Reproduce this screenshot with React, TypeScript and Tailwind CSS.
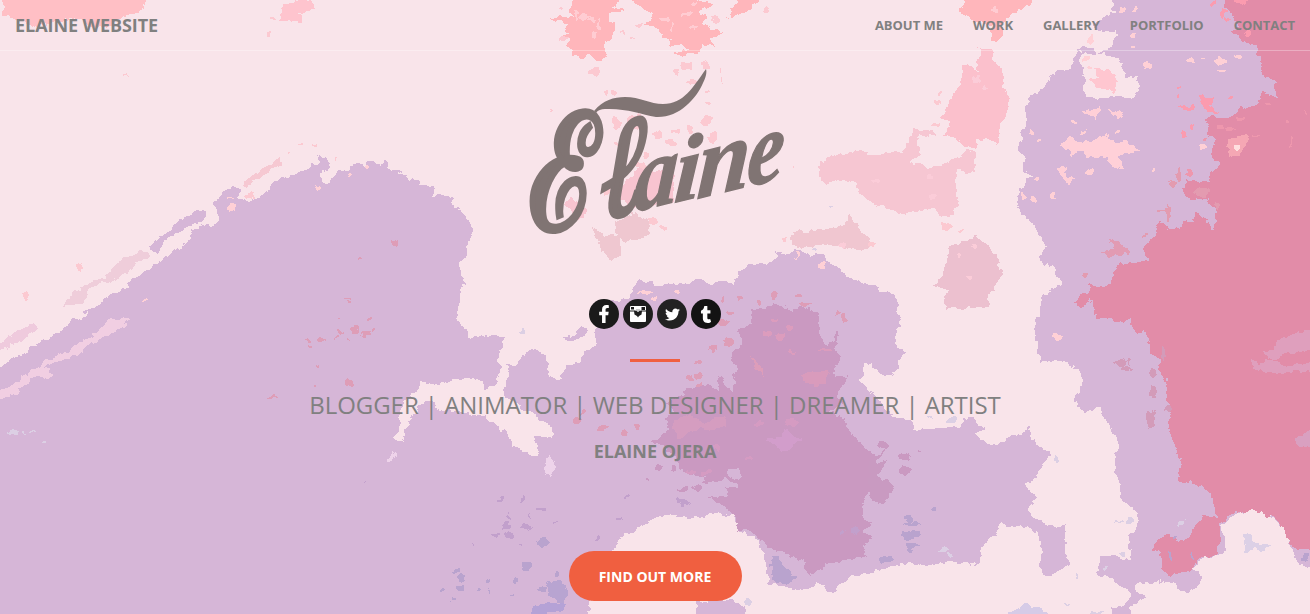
import React from "react";
import { FaFacebookF, FaTumblr, FaTwitter } from "react-icons/fa";

const base =
  "0,367 8,361 27,353 33,345 50,339 63,329 72,320 90,315 84,313 95,308 105,298 128,287 132,280 150,270 165,258 182,247 190,239 192,230 202,227 213,226 220,216 214,203 225,192 235,186 241,190 236,197 248,202 258,197 270,191 272,182 285,178 305,171 310,165 320,163 318,156 328,160 329,170 320,172 322,183 330,184 338,172 350,170 352,163 360,164 365,170 368,163 375,162 380,168 385,161 392,170 402,171 395,174 413,179 420,185 433,187 433,197 440,196 452,198 453,205 465,216 474,230 468,243 466,257 459,264 459,273 464,280 460,295 457,320 472,339 490,335 505,337 503,345 498,353 500,375 494,384 486,390 482,380 463,378 440,383 430,383 423,381 413,393 403,402 399,417 400,425 393,437 402,442 408,425 420,405 430,400 434,406 440,411 455,411 470,415 485,418 500,430 508,434 512,443 520,450 530,455 540,456 537,445 533,437 552,438 552,426 540,420 536,414 527,412 515,402 503,396 504,388 510,376 507,365 518,366 522,357 530,352 538,349 548,362 547,374 556,382 562,378 566,367 573,365 580,362 588,350 597,345 596,330 600,320 598,305 630,298 633,288 641,282 651,281 653,288 670,284 685,284 699,279 710,284 725,282 733,287 738,275 748,264 765,264 778,258 776,252 787,254 797,250 810,255 824,255 828,262 840,270 852,280 870,285 876,285 880,292 893,294 897,305 897,318 900,322 895,335 898,348 906,352 900,360 892,375 885,376 875,369 873,362 864,364 861,377 865,388 875,396 885,410 897,418 910,421 914,430 935,429 960,427 966,418 974,420 976,426 985,428 974,435 982,441 993,445 1003,443 1010,436 1024,435 1028,427 1032,440 1048,453 1048,462 1041,464 1035,478 1024,482 1028,492 1036,497 1027,510 1035,518 1055,528 1066,525 1064,540 1064,555 1070,564 1055,572 1045,577 1039,567 1043,550 1038,535 1028,525 1010,527 1001,522 995,535 980,547 982,556 977,566 966,560 958,563 950,560 933,565 905,563 880,568 870,573 850,575 840,583 835,592 828,590 825,583 815,585 800,590 785,586 770,584 768,573 766,560 760,540 750,536 740,530 733,515 718,512 700,516 688,516 668,514 655,517 640,526 633,532 622,535 613,550 603,590 587,605 587,630 -10,630 -10,370";

const rightPurple =
  "1113,-10 1113,0 1115,13 1104,18 1095,25 1100,30 1112,33 1118,28 1120,36 1113,42 1108,50 1100,54 1112,55 1124,63 1126,77 1137,75 1140,88 1134,99 1120,97 1105,99 1088,98 1082,92 1084,78 1080,60 1078,50 1094,53 1094,49 1080,48 1073,60 1073,70 1058,71 1050,80 1043,90 1030,98 1026,110 1028,122 1022,135 1021,150 1027,155 1023,170 1033,174 1026,182 1023,189 1017,197 1022,213 1032,221 1037,228 1046,242 1046,248 1040,256 1045,264 1053,265 1058,275 1063,283 1052,292 1042,298 1041,312 1035,325 1038,345 1041,360 1060,360 1079,367 1083,380 1082,392 1076,395 1077,405 1085,411 1101,406 1107,420 1117,437 1118,450 1116,470 1121,485 1122,498 1135,508 1141,520 1138,528 1130,535 1131,563 1115,556 1101,557 1098,575 1112,575 1120,586 1130,590 1130,600 1120,608 1112,609 1112,625 1127,625 1130,605 1145,597 1133,590 1133,584 1165,580 1180,586 1188,593 1197,585 1203,575 1190,568 1205,556 1222,553 1225,540 1220,527 1235,513 1252,508 1270,515 1285,528 1292,545 1300,565 1325,568 1325,-10";

const rose =
  "1228,-10 1225,8 1235,20 1240,28 1230,30 1245,42 1257,48 1260,62 1263,78 1275,80 1276,98 1268,94 1262,90 1258,103 1245,110 1240,105 1235,115 1225,118 1205,117 1210,130 1205,134 1216,137 1211,155 1220,165 1211,173 1210,182 1185,181 1184,195 1192,201 1205,197 1214,208 1217,222 1212,230 1205,218 1195,212 1193,222 1182,221 1180,228 1168,230 1160,220 1155,235 1143,247 1147,260 1134,263 1120,263 1113,275 1110,285 1098,287 1090,283 1088,292 1078,298 1074,302 1080,308 1092,300 1095,318 1106,318 1115,322 1130,319 1136,333 1145,330 1150,345 1150,355 1160,358 1160,375 1168,382 1165,400 1172,408 1168,420 1172,440 1180,462 1178,482 1195,484 1209,491 1215,505 1217,518 1204,516 1190,533 1180,542 1170,536 1161,536 1152,548 1160,553 1162,570 1170,575 1180,573 1190,571 1200,558 1218,554 1220,540 1220,525 1232,514 1252,509 1272,517 1283,527 1287,538 1297,549 1325,550 1325,-10";

const mauve =
  "753,307 765,310 775,302 792,310 800,306 820,312 818,325 830,327 840,335 835,350 840,358 832,375 848,377 838,392 843,403 830,412 845,418 850,435 865,445 876,458 873,475 870,490 862,505 864,520 872,522 862,532 872,536 863,546 867,556 850,560 830,562 815,572 808,575 803,560 790,556 775,551 762,540 745,530 738,530 735,517 722,505 708,497 730,496 724,488 740,486 726,478 702,484 706,476 692,476 680,470 678,460 664,445 650,443 668,430 665,418 674,413 668,402 690,388 707,385 719,392 718,377 732,392 736,370 730,353 742,345 738,330 752,325";

type Patch = { fill: string; points: string };

const patches: Patch[] = [
  { fill: "#ffbfc5", points: "3,-10 3,0 4,14 15,18 28,23 38,27 60,21 80,19 90,28 112,26 120,17 133,14 144,8 143,-10" },
  { fill: "#fec4ce", points: "297,-10 297,0 312,0 316,10 305,11 298,14 305,20 302,22 280,21 282,12 282,4 295,3" },
  { fill: "#ffb6bb", points: "574,-10 574,0 569,12 573,16 553,18 553,21 569,22 565,25 568,33 562,35 571,42 564,47 573,50 573,56 585,57 593,57 600,62 607,57 603,52 605,42 612,38 616,23 608,20 608,12 623,12 622,9 612,8 620,0 620,-10" },
  { fill: "#ffb6bb", points: "632,-10 632,0 643,9 654,14 650,20 645,26 659,29 660,36 672,40 667,45 680,45 690,50 674,53 674,55 699,54 702,45 714,45 710,40 723,31 712,30 701,24 709,16 696,12 715,5 697,0 697,-10" },
  { fill: "#ffb6bb", points: "739,-10 737,2 729,10 732,16 724,21 735,16 748,11 758,0 758,-10" },
  { fill: "#ffb6bb", points: "962,-10 963,8 957,11 966,16 973,20 992,27 990,40 996,42 1003,36 1003,24 1009,15 1023,8 1034,0 1034,-10" },
  { fill: "#fbc0cc", points: "979,48 992,50 994,62 1002,70 1004,84 1010,103 1005,118 1000,125 998,142 991,140 977,141 974,149 962,145 954,137 943,136 951,122 943,118 945,111 954,93 960,85 962,68 966,64 978,72" },
  { fill: "#f6c6d2", points: "820,161 835,155 858,151 875,156 886,152 903,151 904,145 908,143 912,128 937,133 937,136 918,135 920,153 912,164 920,163 929,168 949,162 970,150 977,152 975,174 957,170 955,185 958,202 954,216 942,217 932,208 914,211 901,215 890,209 872,204 866,198 856,185 840,179 824,184 820,176" },
  { fill: "#f0c6d0", points: "792,232 812,230 830,229 846,224 850,213 861,232 873,244 861,251 845,247 825,244 803,247 792,246" },
  { fill: "#ecc0cf", points: "948,248 960,243 974,236 986,244 998,260 1002,276 996,283 989,295 989,307 944,308 947,291 934,286 940,278 946,268" },
  { fill: "#f8c4d0", points: "630,177 640,165 655,172 674,165 674,202 632,207 615,196" },
  { fill: "#f8c4d0", points: "564,203 571,197 579,205 586,210 585,218 576,219" },
  { fill: "#efc7d0", points: "591,226 604,236 618,235 615,221 636,213 648,221 650,234 632,242 620,239 621,255 612,260 602,251 599,242" },
  { fill: "#efcdda", points: "63,307 75,291 92,281 105,279 118,262 132,255 143,251 151,257 139,260 130,271 109,281 90,288 84,302" },
  { fill: "#f6c8d2", points: "242,184 256,173 270,165 281,157 283,163 268,171 258,180 247,186" },
  { fill: "#efcadd", points: "-8,348 7,337 20,330 34,321 38,328 21,341 4,350 -8,352" },
  { fill: "#f1cee2", points: "-8,394 13,384 30,371 46,361 72,348 92,336 110,318 130,318 124,326 110,335 90,344 74,357 59,359 44,368 55,374 47,380 36,374 27,385 15,394 -8,400" },
  { fill: "#f9e4ea", points: "184,225 193,226 190,239 178,247 168,249 173,235" },
  { fill: "#d6b6d7", points: "151,245 158,239 172,229 180,219 189,216 196,211 204,209 207,216 200,224 185,228 175,235 164,241 160,252 151,250" },
  { fill: "#ffd0d8", points: "1060,146 1069,135 1076,141 1093,141 1105,134 1118,143 1125,141 1141,149 1132,153 1119,155 1125,170 1111,165 1108,157 1088,157 1083,153 1078,151 1071,159 1071,151" },
  { fill: "#ffc6d0", points: "1093,67 1110,70 1118,80 1115,94 1104,89 1094,84 1088,80 1099,77" },
  { fill: "#ffcfd7", points: "1081,112 1100,106 1096,119 1089,115" },
  { fill: "#ffcfd7", points: "1109,109 1125,114 1120,118 1112,115" },
  { fill: "#ffcfd7", points: "1058,168 1065,167 1064,175 1073,178 1068,184 1060,176" },
  { fill: "#fb9baf", points: "1200,96 1215,96 1209,104 1218,113 1203,111" },
  { fill: "#fb9baf", points: "1178,106 1197,106 1190,110 1180,109" },
  { fill: "#e29bb3", points: "1100,253 1115,249 1110,239 1119,242 1124,248 1131,250 1129,256 1118,254 1111,257" },
  { fill: "#f5a7b4", points: "1228,139 1240,137 1246,132 1249,136 1245,148 1238,154 1229,157" },
  { fill: "#df9fbd", points: "1325,328 1295,333 1276,341 1274,350 1263,351 1268,360 1278,358 1290,352 1325,350" },
  { fill: "#df9fbd", points: "1252,357 1258,364 1272,360 1285,366 1325,360 1325,371 1262,372 1252,368" },
  { fill: "#d9a0c0", points: "1325,430 1310,430 1300,436 1293,441 1300,447 1325,444" },
  { fill: "#d59dc0", points: "672,421 690,415 705,424 720,416 728,424 714,430 700,428 688,434 677,440" },
  { fill: "#d29dcb", points: "765,440 780,436 786,428 792,435 802,440 792,446 782,454 776,444" },
  { fill: "#dd9dba", points: "750,356 762,366 765,378 757,370" },
  { fill: "#d99bbc", points: "800,377 811,372 830,371 825,384 808,385" },
  { fill: "#d6b6d7", points: "819,324 833,322 836,340 826,345 820,338" },
  { fill: "#d6b6d7", points: "726,468 738,468 740,480 730,478" },
  { fill: "#c99ac1", points: "868,465 874,458 885,450 877,464 888,460 877,474 894,486 890,498 879,504 870,498" },
  { fill: "#b9a3ce", points: "770,557 780,555 783,568 798,578 787,584 774,583" },
  { fill: "#b8a4d1", points: "546,584 562,580 568,596 562,604 548,594" },
  { fill: "#b5a2d6", points: "532,606 548,602 566,604 563,612 548,610 540,625 532,625" },
  { fill: "#d6b6d7", points: "696,601 730,600 746,608 747,625 700,625" },
  { fill: "#dcd0e6", points: "1243,535 1251,534 1255,543 1269,545 1263,551 1254,547 1246,556" },
  { fill: "#d6cbe7", points: "1008,611 1028,605 1047,611 1046,625 1007,625" },
  { fill: "#eed3ea", points: "545,464 549,456 555,462 552,475 545,474" },
  { fill: "#eed3ea", points: "388,461 394,450 397,453 391,463" },
  { fill: "#d6b6d7", points: "563,339 578,333 581,325 588,329 584,337 571,340" },
];

type Speck = [number, number, number, number];
const speckGroups: { fill: string; specks: Speck[] }[] = [
  {
    fill: "#fcc9d1",
    specks: [[595, 70, 5, 4], [687, 66, 6, 4], [676, 72, 3, 4], [706, 65, 4, 3], [720, 70, 1, 2], [722, 80, 1, 3], [693, 82, 6, 2], [614, 93, 2, 2], [606, 93, 1, 2], [707, 91, 1, 2], [709, 103, 4, 2], [551, 110, 1, 2], [616, 123, 4, 6], [635, 122, 9, 7], [706, 120, 4, 5], [690, 129, 3, 5], [671, 143, 5, 4], [658, 134, 4, 4], [713, 138, 4, 5], [675, 131, 5, 2], [616, 145, 3, 3], [646, 155, 3, 3], [640, 165, 5, 2], [607, 191, 3, 4], [653, 221, 5, 4], [664, 228, 4, 2], [269, 34, 2, 2], [273, 17, 1, 1], [127, 76, 1, 1], [288, 153, 1, 1], [301, 145, 2, 1], [315, 144, 2, 1], [337, 158, 1, 2], [937, 102, 2, 2], [939, 94, 2, 2], [935, 125, 5, 1], [794, 169, 1, 1], [785, 240, 2, 2], [947, 226, 6, 4], [961, 230, 2, 2], [872, 244, 3, 2], [80, 267, 3, 4], [26, 296, 3, 4], [250, 196, 4, 3], [560, 9, 2, 2], [563, 39, 5, 2], [623, 33, 2, 1], [640, 25, 4, 1], [632, 38, 3, 1], [715, 19, 4, 3], [766, 10, 2, 2]],
  },
  {
    fill: "#ffd0d6",
    specks: [[230, 198, 3, 1], [231, 208, 5, 4], [317, 187, 3, 2], [349, 175, 2, 1], [367, 168, 2, 2], [1123, 10, 4, 3], [1136, 8, 2, 2], [1133, 36, 2, 2], [1133, 47, 2, 1], [1147, 66, 4, 4], [1190, 60, 3, 3], [1203, 58, 3, 1], [1220, 61, 6, 4], [1222, 71, 5, 2], [1238, 57, 4, 2], [1202, 147, 3, 3], [1155, 169, 2, 2], [1090, 172, 4, 3], [1037, 180, 3, 2], [1023, 196, 3, 3], [1033, 200, 3, 2], [1054, 196, 3, 2], [1031, 131, 2, 2], [1038, 140, 2, 1], [797, 255, 2, 3], [822, 265, 3, 3], [646, 292, 7, 2], [676, 292, 4, 2], [654, 299, 2, 2], [145, 301, 3, 1], [1057, 337, 4, 4], [1074, 121, 3, 2], [1084, 132, 3, 2], [1116, 132, 2, 2], [1091, 39, 2, 5], [1087, 58, 4, 2], [1088, 67, 3, 1]],
  },
  {
    fill: "#de9db7",
    specks: [[394, 243, 3, 2], [361, 260, 2, 1], [347, 298, 4, 1], [348, 302, 3, 1], [339, 319, 2, 1], [369, 319, 2, 2], [340, 332, 3, 2], [355, 330, 5, 3], [366, 334, 4, 2], [373, 331, 2, 1], [338, 338, 2, 2], [321, 340, 4, 2], [307, 340, 2, 1], [309, 346, 2, 1], [349, 339, 1, 1], [319, 366, 2, 1], [350, 383, 5, 3], [272, 397, 6, 1], [315, 387, 1, 1], [775, 295, 4, 3], [758, 303, 2, 3], [740, 298, 3, 2], [724, 300, 2, 3], [730, 313, 4, 2], [724, 322, 5, 3], [729, 342, 5, 3], [713, 348, 4, 3], [805, 304, 8, 2], [799, 295, 3, 2], [844, 317, 3, 5], [838, 313, 2, 2], [698, 363, 2, 2], [699, 376, 4, 3], [690, 378, 3, 3], [700, 385, 3, 2], [602, 428, 5, 2], [624, 433, 2, 4], [638, 427, 3, 2], [578, 420, 4, 2], [583, 413, 2, 2]],
  },
  {
    fill: "#ca99c1",
    specks: [[659, 468, 3, 3], [673, 468, 2, 4], [648, 480, 3, 1], [683, 489, 6, 2], [697, 487, 4, 4], [905, 456, 7, 4], [905, 471, 6, 4], [883, 445, 5, 3], [920, 452, 2, 1], [721, 380, 3, 5], [686, 396, 5, 3]],
  },
  {
    fill: "#c2a0cc",
    specks: [[680, 500, 4, 2], [686, 503, 5, 3], [502, 499, 2, 2], [522, 499, 1, 4], [540, 510, 6, 1], [509, 516, 1, 3], [529, 516, 1, 3], [555, 522, 3, 1], [506, 526, 3, 4], [526, 527, 5, 3], [509, 536, 5, 2], [519, 545, 2, 1], [495, 535, 4, 2], [473, 545, 1, 2], [597, 537, 2, 2], [627, 497, 2, 1], [620, 518, 2, 2], [364, 482, 1, 1], [855, 530, 3, 5], [843, 532, 2, 2]],
  },
  {
    fill: "#b9a3ce",
    specks: [[527, 566, 6, 5], [461, 578, 3, 3], [457, 571, 4, 2], [461, 588, 5, 3], [488, 581, 2, 2], [516, 581, 2, 4], [442, 590, 2, 1], [453, 600, 3, 1], [557, 574, 2, 3], [488, 593, 1, 3], [513, 595, 2, 1], [478, 589, 1, 2], [911, 535, 9, 4], [912, 524, 9, 2], [909, 519, 4, 3], [911, 545, 6, 2], [886, 559, 7, 3], [910, 550, 3, 2], [934, 509, 3, 2], [1174, 537, 2, 2], [1170, 557, 1, 5], [1192, 557, 1, 3], [1305, 558, 4, 4], [543, 542, 7, 4], [541, 589, 5, 3]],
  },
  {
    fill: "#dccfe4",
    specks: [[1056, 458, 2, 4], [952, 420, 4, 3], [930, 415, 2, 1], [13, 433, 5, 2], [25, 433, 1, 1], [33, 433, 2, 1], [44, 442, 2, 1], [944, 550, 5, 3], [950, 555, 3, 2], [1119, 522, 5, 1], [1130, 521, 3, 2], [1122, 554, 4, 2], [1106, 567, 2, 2], [1077, 577, 1, 2], [1067, 603, 2, 1], [1180, 524, 4, 2], [1185, 519, 1, 1], [748, 602, 3, 4], [522, 331, 2, 2], [815, 249, 3, 2], [831, 207, 2, 1], [1096, 613, 8, 2]],
  },
  {
    fill: "#fb9baf",
    specks: [[1213, 4, 3, 2], [1223, 14, 3, 5], [1228, 19, 3, 2], [1239, 1, 7, 2], [1248, 34, 3, 2], [1179, 87, 2, 1], [1179, 97, 1, 2], [1183, 134, 3, 3], [1191, 128, 2, 2], [1231, 98, 2, 2]],
  },
  {
    fill: "#ee97ad",
    specks: [[1206, 140, 2, 2], [1220, 126, 3, 3], [1230, 129, 4, 2], [1241, 118, 3, 2], [1267, 104, 3, 2], [1291, 141, 1, 6], [1256, 137, 2, 1], [1287, 121, 1, 2], [1189, 172, 3, 3], [1306, 114, 1, 1]],
  },
  {
    fill: "#e39bb0",
    specks: [[1179, 176, 3, 6], [1172, 184, 4, 2], [1168, 212, 2, 8], [1162, 211, 4, 1], [1202, 192, 8, 4], [1217, 205, 2, 4], [1086, 276, 3, 2], [1145, 236, 2, 2]],
  },
  {
    fill: "#d39bb9",
    specks: [[1120, 363, 6, 2], [1126, 368, 5, 3], [1129, 361, 2, 3], [1153, 373, 3, 5], [1153, 392, 4, 6], [1151, 420, 5, 9], [1163, 353, 2, 7], [1168, 409, 4, 2]],
  },
  {
    fill: "#dc9cbd",
    specks: [[793, 352, 4, 1], [775, 320, 3, 2], [767, 334, 5, 2], [781, 337, 5, 3], [826, 350, 6, 2], [790, 328, 3, 2]],
  },
  {
    fill: "#d59bc2",
    specks: [[707, 473, 5, 2], [690, 472, 4, 2], [716, 448, 3, 2], [748, 458, 4, 2], [792, 422, 6, 3], [760, 424, 5, 2]],
  },
  {
    fill: "#ffccd2",
    specks: [[584, 17, 6, 3], [592, 20, 3, 2], [599, 25, 1, 7], [577, 14, 1, 5], [594, 35, 2, 3], [687, 14, 5, 2], [664, 19, 5, 2], [672, 27, 1, 4], [695, 4, 2, 2], [693, 27, 4, 1], [995, 10, 2, 2]],
  },
  {
    fill: "#fbccd8",
    specks: [[976, 79, 3, 3], [986, 88, 3, 2], [974, 246, 3, 2], [970, 278, 2, 2], [959, 257, 2, 2], [930, 177, 4, 3], [875, 182, 4, 2], [841, 245, 3, 2], [933, 197, 4, 2]],
  },
];

function Watercolour() {
  return (
    <svg
      aria-hidden="true"
      className="absolute inset-0 h-[614px] w-[1310px]"
      viewBox="0 0 1310 614"
      shapeRendering="crispEdges"
    >
      <defs>
        <filter
          id="torn"
          filterUnits="userSpaceOnUse"
          x="-20"
          y="-20"
          width="1350"
          height="654"
          colorInterpolationFilters="sRGB"
        >
          <feTurbulence type="fractalNoise" baseFrequency="0.14" numOctaves="2" seed="7" result="noise" />
          <feDisplacementMap in="SourceGraphic" in2="noise" scale="8" xChannelSelector="R" yChannelSelector="G" />
        </filter>
      </defs>
      <rect width="1310" height="614" fill="#f9e4ea" />
      <g filter="url(#torn)">
        <polygon points={base} fill="#d6b6d7" stroke="#d6b6d7" />
        <polygon points={rightPurple} fill="#d6b6d7" stroke="#d6b6d7" strokeWidth="2" />
        <polygon points={rose} fill="#e28ca8" />
        <polygon points={mauve} fill="#ca99c1" />
        {patches.map((p, i) => (
          <polygon key={i} points={p.points} fill={p.fill} />
        ))}
        {speckGroups.map((g) => (
          <g key={g.fill} fill={g.fill}>
            {g.specks.map(([x, y, rx, ry], i) => (
              <ellipse key={i} cx={x} cy={y} rx={rx} ry={ry} />
            ))}
          </g>
        ))}
        <circle cx="1237" cy="147" r="3" fill="#ffdfdf" />
      </g>
    </svg>
  );
}

function Wordmark() {
  return (
    <svg
      className="block h-[170px] w-[260px] overflow-visible"
      viewBox="527 67 260 170"
      role="img"
      aria-label="Elaine"
      fill="#807473"
      stroke="#807473"
      strokeWidth="0"
    >
      <path d="M594 111 C603 100 614 97 625 97 C640 97 650 104 663 104 C684 104 693 87 706 69 C707 72 706 77 703 83 C696 99 679 118 656 117 C640 114 626 108 605 109 C601 109 598 110 596 113 Z" />
      <g className="font-['Liberation_Serif','DejaVu_Serif',serif] text-[100px] font-bold">
        <text transform="translate(529 232) skewY(-6) scale(1.17 1.57)" strokeWidth="1.5">
          ℰ
        </text>
        <text transform="translate(597 220) skewY(-12) skewX(-10) scale(1.05 1.4)" strokeWidth="3.5">
          ℓ
        </text>
        <g className="italic" strokeWidth="1.5">
          <text transform="translate(633 212) skewY(-14) skewX(-4) scale(0.86 1)">a</text>
          <text transform="translate(673 203) skewY(-14) skewX(-4) scale(0.94 0.92)">i</text>
          <text transform="translate(696 199) skewY(-14) skewX(-4) scale(0.94 1)">n</text>
          <text transform="translate(746 187) skewY(-14) skewX(-4) scale(0.82 1)">e</text>
        </g>
      </g>
    </svg>
  );
}

function CameraGlyph() {
  return (
    <svg className="h-4 w-4" viewBox="0 0 16 16" aria-hidden="true">
      <rect width="16" height="16" rx="1" fill="#fff" />
      <path d="M0 4.500h5v1H0zM11 4.500h5v1h-5zM1 1h3v2.500H1zM11.500 1h3.500v3h-3.500z" fill="#1d1d1d" />
      <path d="M4 5L6 4.500 8 6 10 4.500 12 5 11.500 8.500 9 10 8 11.500 7 10 4.500 8.500Z" fill="#1d1d1d" />
      <path d="M6 3.500h4v1H6z" fill="#999" />
    </svg>
  );
}

const links = ["ABOUT ME", "WORK", "GALLERY", "PORTFOLIO", "CONTACT"];

const socials = [
  { name: "Facebook", bg: "bg-[#1a1a1a]", icon: <FaFacebookF className="h-[18px] w-[12px]" /> },
  { name: "Instagram", bg: "bg-[#1d1d1d]", icon: <CameraGlyph /> },
  { name: "Twitter", bg: "bg-[#222222]", icon: <FaTwitter className="h-[15px] w-[15px]" /> },
  { name: "Tumblr", bg: "bg-[#131313]", icon: <FaTumblr className="h-[17px] w-[12px]" /> },
];

export default function App() {
  return (
    <div className="relative h-[614px] w-[1310px] overflow-hidden bg-[#f9e4ea] font-['Open_Sans',sans-serif] text-[#808080]">
      <Watercolour />
      <div className="relative flex h-full flex-col">
        <header className="flex h-[51px] shrink-0 items-center justify-between border-b border-white/30 px-[15px]">
          <a href="#top" className="text-[18px] leading-5 font-bold tracking-[-0.06px]">
            ELAINE WEBSITE
          </a>
          <nav className="flex gap-[30px] text-[13px] leading-5 font-bold tracking-[-0.03px]">
            {links.map((link) => (
              <a key={link} href="#top">
                {link}
              </a>
            ))}
          </nav>
        </header>
        <main className="flex flex-1 flex-col items-center pt-4">
          <h1 className="ml-1">
            <Wordmark />
          </h1>
          <div className="mt-[62px] flex gap-1">
            {socials.map((s) => (
              <a
                key={s.name}
                href="#top"
                aria-label={s.name}
                className={`flex h-[30px] w-[30px] items-center justify-center rounded-full text-white ${s.bg}`}
              >
                {s.icon}
              </a>
            ))}
          </div>
          <hr className="mt-[30px] h-[3px] w-[50px] border-0 bg-[#f05f40]" />
          <p className="mt-[25px] text-[24px] leading-9 tracking-[-0.05px] whitespace-nowrap">
            BLOGGER | ANIMATOR | WEB DESIGNER | DREAMER | ARTIST
          </p>
          <p className="mt-[15px] text-[18px] leading-[27px] font-bold">ELAINE OJERA</p>
          <a
            href="#top"
            className="mt-[86px] flex h-[50px] w-[173px] items-center justify-center rounded-full bg-[#f05f40] text-[14px] font-bold text-white"
          >
            FIND OUT MORE
          </a>
        </main>
      </div>
    </div>
  );
}
